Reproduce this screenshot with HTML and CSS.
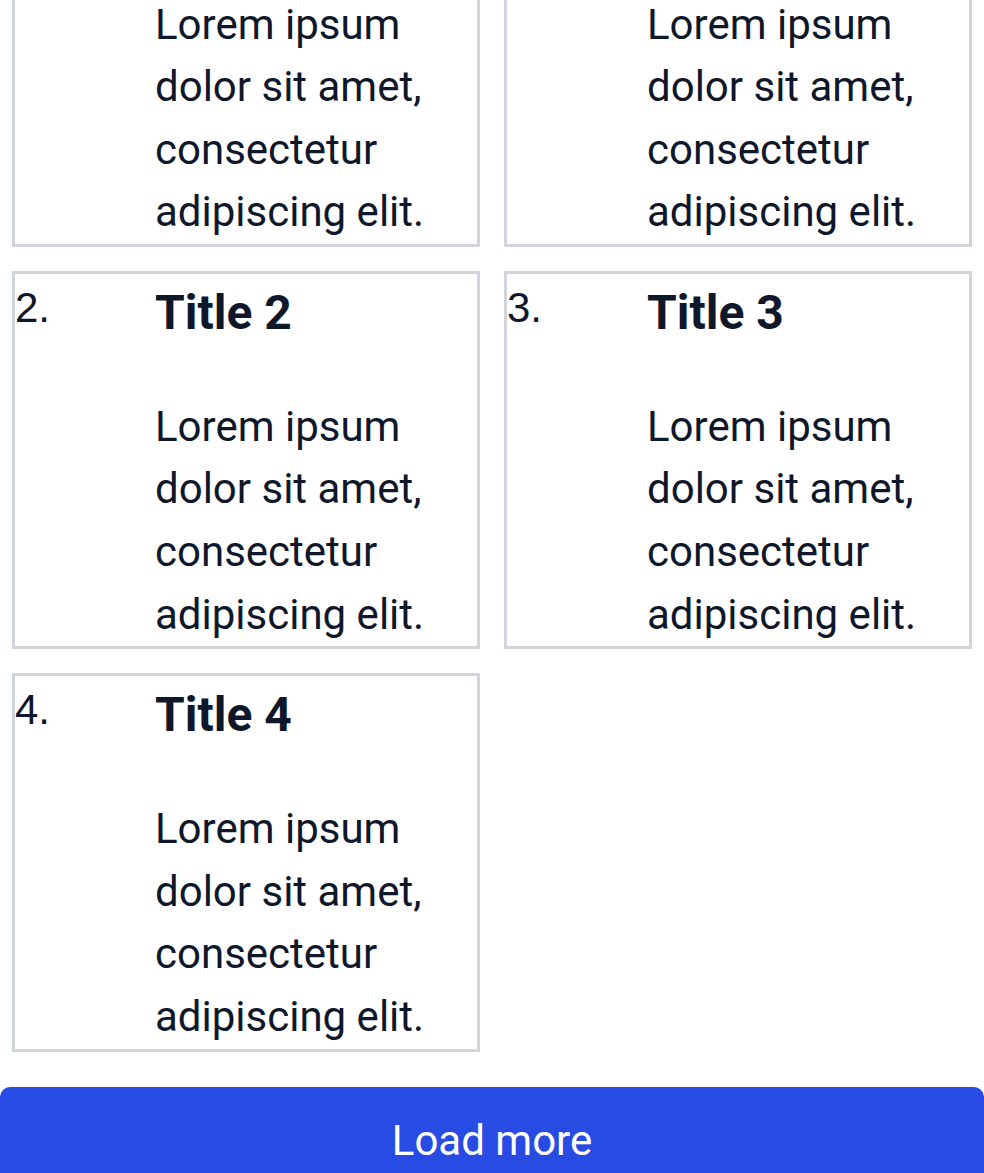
FILE: index.html
```html
<!DOCTYPE html>
<html lang="en">
<head>
<meta charset="utf-8">
<title>List</title>
<link rel="stylesheet" href="styles.css">
</head>
<body>
<main class="page">
  <ol class="cards">
    <li class="card">
      <span class="num">0.</span>
      <div class="body">
        <h2 class="title">Title 0</h2>
        <p class="text">Lorem ipsum dolor sit amet, consectetur adipiscing elit.</p>
      </div>
    </li>
    <li class="card">
      <span class="num">1.</span>
      <div class="body">
        <h2 class="title">Title 1</h2>
        <p class="text">Lorem ipsum dolor sit amet, consectetur adipiscing elit.</p>
      </div>
    </li>
    <li class="card">
      <span class="num">2.</span>
      <div class="body">
        <h2 class="title">Title 2</h2>
        <p class="text">Lorem ipsum dolor sit amet, consectetur adipiscing elit.</p>
      </div>
    </li>
    <li class="card">
      <span class="num">3.</span>
      <div class="body">
        <h2 class="title">Title 3</h2>
        <p class="text">Lorem ipsum dolor sit amet, consectetur adipiscing elit.</p>
      </div>
    </li>
    <li class="card">
      <span class="num">4.</span>
      <div class="body">
        <h2 class="title">Title 4</h2>
        <p class="text">Lorem ipsum dolor sit amet, consectetur adipiscing elit.</p>
      </div>
    </li>
  </ol>
  <button class="load-more" type="button">Load more</button>
</main>
</body>
</html>
```
FILE: styles.css
```css
html, body {
  margin: 0;
  padding: 0;
  background: #ffffff;
}

body {
  font-family: Roboto, "Noto Sans", sans-serif;
  color: #0f172a;
  overflow: hidden;
}

.page {
  display: flex;
  flex-direction: column;
}

.cards {
  list-style: none;
  margin: -131.5px 0 0 0;
  padding: 0 12px;
  display: grid;
  grid-template-columns: 1fr 1fr;
  column-gap: 24px;
  row-gap: 24px;
}

.card {
  border: 3px solid #d1d5db;
  padding-top: 3px;
  display: grid;
  grid-template-columns: 140px 1fr;
  align-items: start;
  min-width: 0;
}

.num {
  font-family: "Liberation Sans", Arial, sans-serif;
  font-size: 42px;
  line-height: 61px;
  color: #0f172a;
}

.body {
  min-width: 0;
}

.title {
  margin: 0 0 48px 0;
  font-size: 48px;
  line-height: 71px;
  font-weight: 700;
  color: #0f172a;
}

.text {
  margin: 0;
  font-size: 42px;
  line-height: 62.6px;
  color: #0f172a;
}

.load-more {
  margin-top: 35px;
  width: 100%;
  border: none;
  border-radius: 10px;
  background: #284be4;
  color: #ffffff;
  font-family: Roboto, "Noto Sans", sans-serif;
  font-size: 42px;
  line-height: 63px;
  padding: 22px 0 22px 0;
  text-align: center;
}
```
